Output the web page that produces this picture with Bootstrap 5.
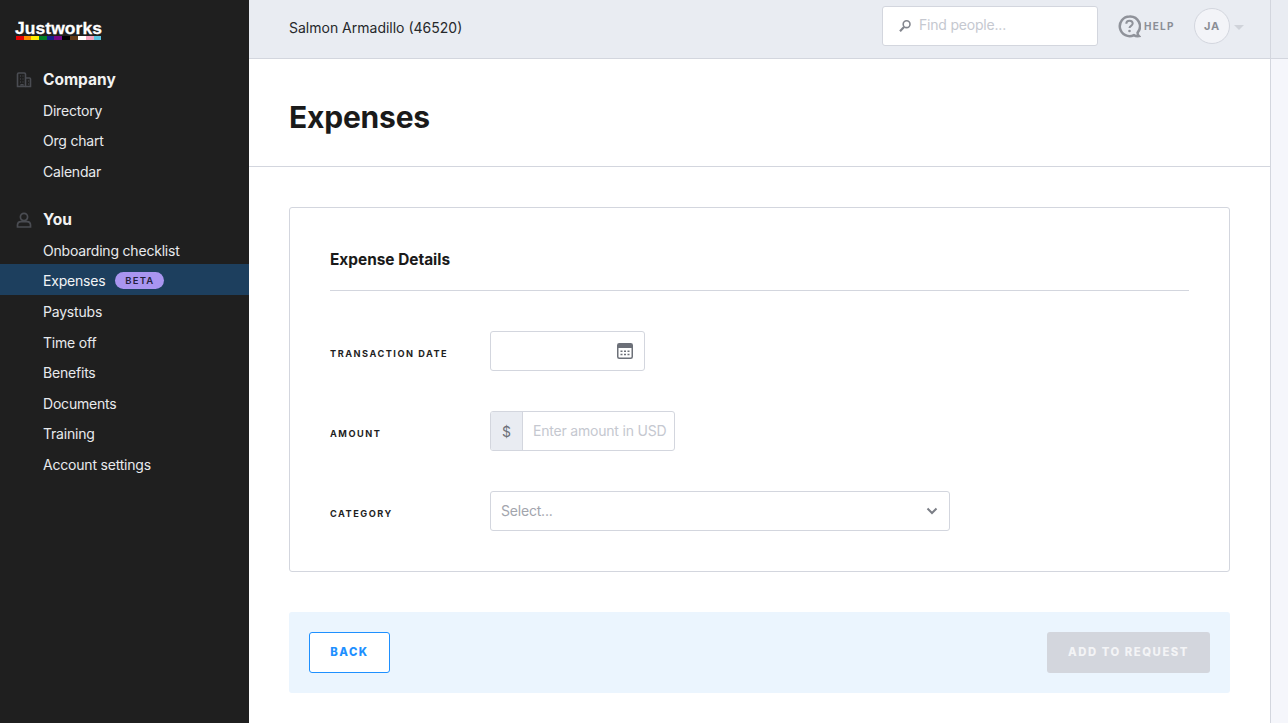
<!DOCTYPE html>
<html lang="en">
<head>
<meta charset="utf-8">
<title>Expenses</title>
<link href="https://cdn.jsdelivr.net/npm/bootstrap@5.3.0/dist/css/bootstrap.min.css" rel="stylesheet">
<style>
html,body{height:100%;overflow:hidden}
body{font-family:Inter,"Liberation Sans",sans-serif;color:#1a1a1a;background:#fff;font-size:14px}
.shell{height:723px;width:1288px}
.side{width:249px;background:#1f1f1f;color:#eceef0;flex:none}
.logo-box{padding:21px 0 0 15px;height:69px}
.logo-word{font-family:"Liberation Sans",sans-serif;font-weight:700;font-size:17.4px;line-height:15px;color:#fff;letter-spacing:.1px;width:86px;display:block;white-space:nowrap;-webkit-text-stroke:.3px #fff}
.logo-flag{width:85px;height:4px;margin-left:1px;display:block}
.sec-head{height:22px;padding-left:16px;font-size:15.5px;font-weight:700;color:#f2f2f2;gap:11px;line-height:22px}
.sec-head svg{flex:none}
.sec-two{margin-top:24px}
.nav-list{margin-top:2.75px}
.side-link{display:block;height:30.5px;line-height:27.5px;padding-top:3px;padding-left:43px;color:#e8eaed;font-size:14px;letter-spacing:-.2px;text-decoration:none}
.side-link.on{background:#1d3f5e;color:#f2f4f6;margin-top:-.5px;height:31px}
.pill-beta{background:#a995f0;color:#241f3c;font-size:9.5px;font-weight:600;letter-spacing:1.2px;border-radius:9px;width:49px;height:17px;line-height:17px;text-align:center;margin-left:10px;display:inline-block;vertical-align:2.5px}
.mainc{flex:1 1 auto;min-width:0}
.topb{height:59px;background:#e9ecf2;border-bottom:1px solid #d3d6de;padding:0 0 6px 40px}
.acct{font-size:14px;color:#26282b;line-height:18px;padding-top:3px}
.findbox{width:216px;height:40px;background:#fff;border:1px solid #d3d6de;border-radius:3px;margin-left:auto;padding-left:15px;gap:7px;font-size:14px;letter-spacing:-.2px;color:#c5c8d0}
.findbox span{padding-bottom:3px}
.helpw{margin-left:20px;gap:3px;color:#8b8e96;font-size:10px;font-weight:700;letter-spacing:1.25px;width:76px}
.avat{width:36px;height:36px;border-radius:50%;background:#f3f4f8;border:1px solid #d3d6de;color:#8b8e96;font-size:11px;font-weight:700;letter-spacing:.8px;margin-right:4px}
.caret-d{width:0;height:0;border-left:5px solid transparent;border-right:5px solid transparent;border-top:5px solid #d0d3da;margin-right:26px;margin-top:2px}
.pg-head{height:108px;border-bottom:1px solid #d3d6de;padding-left:40px;padding-top:8px}
.pg-title{font-size:30px;font-weight:700;color:#1a1a1a;margin:0;letter-spacing:-.2px}
.pg-body{padding:40px 40px 0}
.box-main{height:365px;border:1px solid #d3d6de;border-radius:3px;padding:0 40px}
.box-title{height:83px;border-bottom:1px solid #d3d6de;font-size:15.4px;font-weight:700;color:#1a1a1a;margin:0;padding-top:42px;line-height:20px}
.frm-row{height:40px;margin-top:40px}
.frm-lab{width:160px;font-size:9.2px;font-weight:700;letter-spacing:1.5px;color:#1f1f1f;padding-top:6px;margin:0;flex:none}
.fld{height:40px;border:1px solid #d3d6de;border-radius:3px;background:#fff;font-size:14px;letter-spacing:-.2px}
.fld-date{width:155px;justify-content:flex-end;padding-right:11px}
.fld-amt{width:185px;overflow:hidden}
.dollar{width:32px;height:100%;background:#e9ecf2;border-right:1px solid #d3d6de;color:#6c7078;flex:none}
.hint{color:#c5c8d0;padding-left:10px;padding-bottom:2px;white-space:nowrap}
.fld-sel{width:460px;padding:0 11px 0 10px;color:#a2a5ad}
.fld-sel span{padding-bottom:2px}
.act-bar{margin-top:40px;height:81px;background:#ebf5fe;border-radius:3px;padding:0 20px}
.btn-back{width:81px;height:41px;background:#fff;border:1px solid #1e90ff;border-radius:3px;color:#1e90ff;font-size:11.3px;font-weight:800;letter-spacing:1.5px;padding:0}
.btn-add{width:163px;height:41px;background:#d3d6dd;border:0;border-radius:3px;color:#f3f4f6;font-size:11.3px;font-weight:800;letter-spacing:1.55px;padding:0}
.btn-add:disabled{background:#d3d6dd;color:#f3f4f6;opacity:1}
.strip{width:18px;flex:none;background:#f5f6fb;border-left:1px solid #d3d6de}
.strip-top{height:59px;background:#e9ecf2;border-bottom:1px solid #d3d6de}
</style>
</head>
<body>
<div class="shell d-flex">
  <nav class="side d-flex flex-column">
    <div class="logo-box">
      <span class="logo-word">Justworks</span>
      <svg class="logo-flag" viewBox="0 0 85 4" preserveAspectRatio="none" aria-hidden="true">
        <rect x="0" width="8" height="4" fill="#e40303"/><rect x="8" width="8" height="4" fill="#ff8c00"/><rect x="15" width="8" height="4" fill="#ffed00"/><rect x="23" width="8" height="4" fill="#008026"/><rect x="31" width="8" height="4" fill="#14218a"/><rect x="38" width="8" height="4" fill="#750787"/><rect x="46" width="8" height="4" fill="#000"/><rect x="54" width="8" height="4" fill="#613915"/><rect x="62" width="8" height="4" fill="#fff"/><rect x="70" width="8" height="4" fill="#f4a6c0"/><rect x="78" width="7" height="4" fill="#5bc3e0"/>
      </svg>
    </div>
    <div class="sec-head d-flex align-items-center">
      <svg width="16" height="16" viewBox="0 0 16 16" fill="none" stroke="#4a4c52" stroke-width="1.6"><path d="M1.500 14.500V2.200c0-.7.5-1.200 1.200-1.200h5.600c.7 0 1.200.5 1.200 1.200v12.300z"/><path d="M9.500 6h4c.6 0 1 .4 1 1v7.500h-5"/><path d="M4 4h1M6.500 4h1M4 7h1M6.500 7h1M4 10h1M6.500 10h1M12 9h1M12 12h1M5 14.500v-2h2v2" stroke-width="1.200"/></svg>
      <span>Company</span>
    </div>
    <div class="nav-list">
      <a class="side-link" href="#">Directory</a>
      <a class="side-link" href="#">Org chart</a>
      <a class="side-link" href="#">Calendar</a>
    </div>
    <div class="sec-head sec-two d-flex align-items-center">
      <svg width="16" height="16" viewBox="0 0 16 16" fill="none" stroke="#4a4c52" stroke-width="1.700"><circle cx="8" cy="5" r="3.600"/><path d="M1.500 15v-2c0-2 1.600-3.400 3.600-3.400h5.800c2 0 3.600 1.400 3.600 3.400v2z"/></svg>
      <span>You</span>
    </div>
    <div class="nav-list">
      <a class="side-link" href="#">Onboarding checklist</a>
      <a class="side-link on" href="#">Expenses<span class="pill-beta">BETA</span></a>
      <a class="side-link" href="#">Paystubs</a>
      <a class="side-link" href="#">Time off</a>
      <a class="side-link" href="#">Benefits</a>
      <a class="side-link" href="#">Documents</a>
      <a class="side-link" href="#">Training</a>
      <a class="side-link" href="#">Account settings</a>
    </div>
  </nav>
  <main class="mainc d-flex flex-column">
    <header class="topb d-flex align-items-center">
      <span class="acct">Salmon Armadillo (46520)</span>
      <div class="findbox d-flex align-items-center">
        <svg width="14" height="14" viewBox="0 0 14 14" fill="none" stroke="#83868e"><circle cx="8.600" cy="5.200" r="3.400" stroke-width="1.600"/><path d="M6 8 2 12.200" stroke-width="2.200"/></svg>
        <span>Find people...</span>
      </div>
      <div class="helpw d-flex align-items-center">
        <svg width="23" height="23" viewBox="0 0 23 23" fill="none"><path d="M11.500 1.500a9.800 9.800 0 1 0 4.400 18.600c1.600 1 3.300 1.200 5 .9-.9-1-1.400-2-1.300-3.400a9.800 9.800 0 0 0-8.100-16.100z" stroke="#8f929a" stroke-width="2.500"/><path d="M8.300 8.800c0-1.800 1.400-3 3.200-3s3.200 1.100 3.200 2.800c0 2.300-3.200 2.300-3.200 4.500" stroke="#8f929a" stroke-width="2"/><circle cx="11.500" cy="16" r="1.300" fill="#8f929a"/></svg>
        <span>HELP</span>
      </div>
      <div class="avat d-flex align-items-center justify-content-center">JA</div>
      <div class="caret-d"></div>
    </header>
    <section class="pg-head d-flex align-items-center"><h1 class="pg-title">Expenses</h1></section>
    <div class="pg-body">
      <div class="box-main">
        <h2 class="box-title">Expense Details</h2>
        <div class="frm-row d-flex align-items-center">
          <label class="frm-lab">TRANSACTION DATE</label>
          <div class="fld fld-date d-flex align-items-center">
            <svg width="16" height="16" viewBox="0 0 16 16"><rect x=".75" y=".75" width="14.500" height="14.500" rx="1.500" fill="none" stroke="#6c7078" stroke-width="1.500"/><rect x="1" y="1" width="14" height="4" fill="#6c7078"/><path d="M3.500 7.500h2v1.500h-2zM7 7.500h2v1.500H7zM10.500 7.500h2v1.500h-2zM3.500 10.800h2v1.500h-2zM7 10.800h2v1.500H7zM10.500 10.800h2v1.500h-2z" fill="#6c7078"/></svg>
          </div>
        </div>
        <div class="frm-row d-flex align-items-center">
          <label class="frm-lab">AMOUNT</label>
          <div class="fld fld-amt d-flex align-items-center">
            <span class="dollar d-flex align-items-center justify-content-center">$</span>
            <span class="hint">Enter amount in USD</span>
          </div>
        </div>
        <div class="frm-row d-flex align-items-center">
          <label class="frm-lab">CATEGORY</label>
          <div class="fld fld-sel d-flex align-items-center justify-content-between">
            <span>Select...</span>
            <svg width="12" height="8" viewBox="0 0 12 8" fill="none" stroke="#7b7e86" stroke-width="2"><path d="M1.500 1.500 6 6l4.500-4.500"/></svg>
          </div>
        </div>
      </div>
      <div class="act-bar d-flex align-items-center justify-content-between">
        <button type="button" class="btn btn-back">BACK</button>
        <button type="button" class="btn btn-add" disabled>ADD TO REQUEST</button>
      </div>
    </div>
  </main>
  <div class="strip"><div class="strip-top"></div></div>
</div>
<script src="https://cdn.jsdelivr.net/npm/bootstrap@5.3.0/dist/js/bootstrap.bundle.min.js"></script>
</body>
</html>
